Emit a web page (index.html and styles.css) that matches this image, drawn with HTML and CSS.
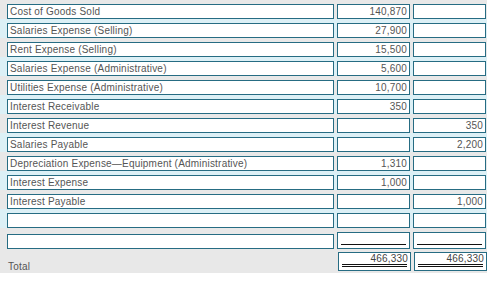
FILE: index.html
```html
<!DOCTYPE html>
<html>
<head>
<meta charset="utf-8">
<link rel="stylesheet" href="styles.css">
</head>
<body>
<div class="sheet">
  <div class="row gray"><div class="box label">Cost of Goods Sold</div><div class="box amt">140,870</div><div class="box amt"></div></div>
  <div class="row blue"><div class="box label">Salaries Expense (Selling)</div><div class="box amt">27,900</div><div class="box amt"></div></div>
  <div class="row gray"><div class="box label">Rent Expense (Selling)</div><div class="box amt">15,500</div><div class="box amt"></div></div>
  <div class="row blue"><div class="box label">Salaries Expense (Administrative)</div><div class="box amt">5,600</div><div class="box amt"></div></div>
  <div class="row gray"><div class="box label">Utilities Expense (Administrative)</div><div class="box amt">10,700</div><div class="box amt"></div></div>
  <div class="row blue"><div class="box label">Interest Receivable</div><div class="box amt">350</div><div class="box amt"></div></div>
  <div class="row gray"><div class="box label">Interest Revenue</div><div class="box amt"></div><div class="box amt">350</div></div>
  <div class="row blue"><div class="box label">Salaries Payable</div><div class="box amt"></div><div class="box amt">2,200</div></div>
  <div class="row gray"><div class="box label">Depreciation Expense—Equipment (Administrative)</div><div class="box amt">1,310</div><div class="box amt"></div></div>
  <div class="row blue"><div class="box label">Interest Expense</div><div class="box amt">1,000</div><div class="box amt"></div></div>
  <div class="row gray"><div class="box label">Interest Payable</div><div class="box amt"></div><div class="box amt">1,000</div></div>
  <div class="row blue"><div class="box label"></div><div class="box amt"></div><div class="box amt"></div></div>
  <div class="row gray last"><div class="box label"></div><div class="box amt single"></div><div class="box amt single"></div></div>
  <div class="row gray total"><div class="total-label">Total</div><div class="box amt double">466,330</div><div class="box amt double">466,330</div></div>
</div>
</body>
</html>
```
FILE: styles.css
```css
html, body {
  margin: 0;
  padding: 0;
  background: #ffffff;
}
.sheet {
  width: 487px;
  font-family: "Liberation Sans", Arial, sans-serif;
  font-size: 10px;
  letter-spacing: 0.2px;
  color: #555555;
}
.row {
  display: flex;
  align-items: flex-start;
  gap: 3px;
  padding: 4px 0 0 7px;
  height: 19px;
  box-sizing: border-box;
}
.gray { background: #e8e8e8; }
.blue { background: #dcf0f6; }
.box {
  height: 15px;
  box-sizing: border-box;
  border: 1px solid #266c83;
  background: #ffffff;
  line-height: 13px;
  padding: 0 2px;
  white-space: nowrap;
  overflow: hidden;
}
.label { width: 327px; }
.amt { width: 73px; text-align: right; position: relative; }
.last { height: 21px; }
.last .label { margin-top: 2px; }
.last .amt { height: 17px; }
.single::after {
  content: "";
  position: absolute;
  left: 3px;
  right: 3px;
  bottom: 3px;
  border-top: 1px solid #111;
}
.total {
  height: 24px;
  padding-top: 3px;
}
.total-label {
  width: 327px;
  padding: 8px 0 0 1px;
  line-height: 13px;
}
.double {
  height: 19px;
  line-height: 12px;
  color: #444;
}
.double::after {
  content: "";
  position: absolute;
  left: 3px;
  right: 3px;
  bottom: 3px;
  height: 1px;
  border-top: 1px solid #111;
  border-bottom: 1px solid #111;
}
```
